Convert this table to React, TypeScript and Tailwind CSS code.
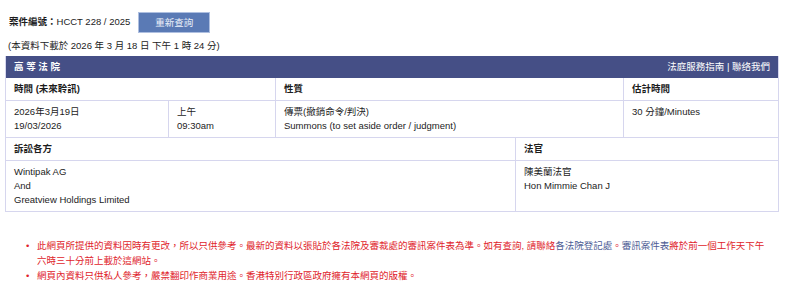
export default function App() {
  const cell = "px-[8px] py-[4px] leading-[14px]";
  return (
    <div className="w-[800px] h-[298px] bg-white text-[#1c1c1c] text-[9.5px] font-['Liberation_Sans','Noto_Sans_CJK_TC',sans-serif] overflow-hidden">
      {/* case number + refresh */}
      <div className="flex items-center pl-[9px] pt-[12px]">
        <span className="font-bold">案件編號：</span>
        <span>HCCT 228 / 2025</span>
        <button className="ml-[8px] w-[72px] h-[21px] bg-[#5a7ab5] border border-[#aebfe0] text-[#eef2fa] leading-none">
          重新查詢
        </button>
      </div>
      <div className="pl-[8px] mt-[6px] leading-[14px]">(本資料下載於 2026 年 3 月 18 日 下午 1 時 24 分)</div>

      {/* court table */}
      <div className="ml-[5px] mt-[3px] w-[774px] border-x border-b border-[#d6d6ee]">
        <div className="flex items-center justify-between h-[22px] bg-[#454f86] text-white px-[8px]">
          <span className="font-bold">高 等 法 院</span>
          <span>法庭服務指南 | 聯络我們</span>
        </div>

        <div className="flex border-b border-[#d6d6ee] font-bold">
          <div className={`w-[270px] border-r border-[#d6d6ee] ${cell}`}>時間 (未來聆訊)</div>
          <div className={`w-[348px] border-r border-[#d6d6ee] ${cell}`}>性質</div>
          <div className={`flex-1 ${cell}`}>估計時間</div>
        </div>
        <div className="flex border-b border-[#d6d6ee]">
          <div className={`w-[163px] border-r border-[#d6d6ee] ${cell}`}>
            <div>2026年3月19日</div>
            <div>19/03/2026</div>
          </div>
          <div className={`w-[107px] border-r border-[#d6d6ee] ${cell}`}>
            <div>上午</div>
            <div>09:30am</div>
          </div>
          <div className={`w-[348px] border-r border-[#d6d6ee] ${cell}`}>
            <div>傳票(撤銷命令/判決)</div>
            <div>Summons (to set aside order / judgment)</div>
          </div>
          <div className={`flex-1 ${cell}`}>30 分鐘/Minutes</div>
        </div>

        <div className="flex border-b border-[#d6d6ee] font-bold">
          <div className={`w-[510px] border-r border-[#d6d6ee] ${cell}`}>訴訟各方</div>
          <div className={`flex-1 ${cell}`}>法官</div>
        </div>
        <div className="flex">
          <div className={`w-[510px] border-r border-[#d6d6ee] ${cell}`}>
            <div>Wintipak AG</div>
            <div>And</div>
            <div>Greatview Holdings Limited</div>
          </div>
          <div className={`flex-1 ${cell}`}>
            <div>陳美蘭法官</div>
            <div>Hon Mimmie Chan J</div>
          </div>
        </div>
      </div>

      {/* notes */}
      <ul className="mt-[26px] text-[#e0242b] leading-[15px]">
        <li className="flex">
          <span className="w-[37px] shrink-0 pl-[26px]">•</span>
          <span className="w-[732px]">
            此網頁所提供的資料因時有更改，所以只供參考。最新的資料以張貼於各法院及審裁處的審訊案件表為準。如有查詢, 請聯絡
            <a className="text-[#4d5c94]">各法院登記處</a>。<a className="text-[#4d5c94]">審訊案件表</a>將於前一個工作天下午六時三十分前上載於這網站。
          </span>
        </li>
        <li className="flex">
          <span className="w-[37px] shrink-0 pl-[26px]">•</span>
          <span className="w-[732px]">網頁內資料只供私人參考，嚴禁翻印作商業用途。香港特別行政區政府擁有本網頁的版權。</span>
        </li>
      </ul>
    </div>
  );
}
